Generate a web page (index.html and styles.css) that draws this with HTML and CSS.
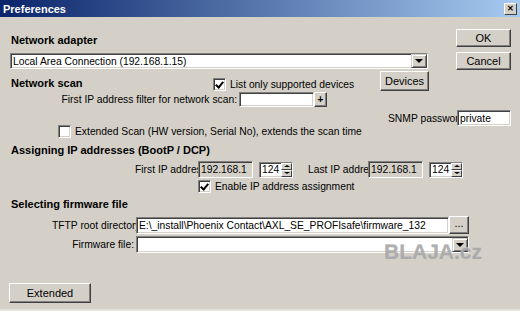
FILE: index.html
```html
<!DOCTYPE html>
<html lang="en">
<head>
  <meta charset="UTF-8" />
  <title>Preferences</title>
  <link rel="stylesheet" href="styles.css">
</head>
<body>
  <div class="ventana">
    <!-- Barra de titulo -->
    <div class="titulo">
      <span>Preferences</span>
      <span class="cerrar">&#x2715;</span>
    </div>

    <!-- Adaptador de red + botones OK/Cancel -->
    <div class="arriba">
      <div class="adaptador">
        <div class="encabezado enc-adaptador">Network adapter</div>
        <div class="campo combo combo-adaptador">
          <span class="texto">Local Area Connection (192.168.1.15)</span>
          <span class="desplegar"><i></i></span>
        </div>
      </div>
      <div class="acciones">
        <div class="boton ok">OK</div>
        <div class="boton cancel">Cancel</div>
      </div>
    </div>

    <!-- Escaneo de red -->
    <div class="fila fila-scan">
      <div class="encabezado enc-scan">Network scan</div>
      <label class="opcion opcion-lista"><span class="casilla marcada"></span>List only supported devices</label>
      <div class="boton devices">Devices</div>
    </div>
    <div class="fila fila-filtro">
      <span class="etiqueta etq-filtro">First IP address filter for network scan:</span>
      <span class="campo filtro"></span>
      <span class="boton mas">+</span>
    </div>
    <div class="fila fila-snmp">
      <span class="etiqueta etq-snmp">SNMP password:</span>
      <span class="campo snmp"><span class="texto">private</span></span>
    </div>
    <div class="fila fila-extendido">
      <label class="opcion"><span class="casilla"></span>Extended Scan (HW version, Serial No), extends the scan time</label>
    </div>

    <!-- Asignacion de IP -->
    <div class="encabezado enc-asignar">Assigning IP addresses (BootP / DCP)</div>
    <div class="fila fila-ip">
      <span class="etiqueta etq-primera">First IP address:</span>
      <span class="campo gris ip"><span class="texto">192.168.1</span></span>
      <span class="campo giro"><span class="texto">124</span><span class="flechas"><i class="arriba-f"></i><i class="abajo-f"></i></span></span>
      <span class="etiqueta etq-ultima">Last IP address:</span>
      <span class="campo gris ip"><span class="texto">192.168.1</span></span>
      <span class="campo giro"><span class="texto">124</span><span class="flechas"><i class="arriba-f"></i><i class="abajo-f"></i></span></span>
    </div>
    <div class="fila fila-habilitar">
      <label class="opcion"><span class="casilla marcada"></span>Enable IP address assignment</label>
    </div>

    <!-- Firmware -->
    <div class="encabezado enc-firmware">Selecting firmware file</div>
    <div class="fila fila-tftp">
      <span class="etiqueta etq-archivo">TFTP root directory:</span>
      <span class="campo tftp"><span class="texto">E:\_install\Phoenix Contact\AXL_SE_PROFIsafe\firmware_132</span></span>
      <span class="boton puntos">...</span>
    </div>
    <div class="fila fila-firmware">
      <span class="etiqueta etq-archivo">Firmware file:</span>
      <span class="campo combo combo-firmware"><span class="texto"></span><span class="desplegar"><i></i></span></span>
    </div>

    <div class="fila fila-extended">
      <div class="boton extended">Extended</div>
    </div>

    <div class="marca">BLAJA.cz</div>
  </div>
</body>
</html>
```

FILE: styles.css
```css
body {
  margin: 0;
  padding: 0;
  font-family: 'Liberation Sans', Arial, sans-serif;
  font-size: 10.3px;
  color: #000;
  background: #d4d0c8;
}
.ventana {
  position: relative;
  width: 520px;
  height: 311px;
  overflow: hidden;
  background: #d4d0c8;
  box-sizing: border-box;
  border-bottom: 2px solid #e4e2dc;
}
.titulo {
  height: 17px;
  display: flex;
  align-items: center;
  justify-content: space-between;
  padding: 0 3px;
  background: linear-gradient(to right, #0a246a, #a6caf0);
  color: #fff;
  font-weight: bold;
  font-size: 11px;
}
.cerrar {
  width: 11px;
  height: 10px;
  background: #d4d0c8;
  color: #000;
  font-size: 8px;
  line-height: 10px;
  text-align: center;
  border: 1px solid;
  border-color: #fff #404040 #404040 #fff;
}

/* Controles tipo Windows */
.boton {
  display: flex;
  align-items: center;
  justify-content: center;
  box-sizing: border-box;
  background: #d4d0c8;
  border: 1px solid;
  border-color: #fff #404040 #404040 #fff;
  box-shadow: inset -1px -1px #808080;
  font-size: 11px;
}
.campo {
  display: flex;
  align-items: center;
  box-sizing: border-box;
  background: #fff;
  border: 1px solid;
  border-color: #808080 #fff #fff #808080;
  box-shadow: inset 1px 1px #404040, inset -1px -1px #d4d0c8;
  overflow: hidden;
  white-space: nowrap;
}
.campo .texto {
  flex: 1;
  padding-left: 2px;
  overflow: hidden;
}
.campo.gris {
  background: #d4d0c8;
}
.casilla {
  display: inline-block;
  flex-shrink: 0;
  width: 13px;
  height: 13px;
  box-sizing: border-box;
  background: #fff;
  border: 1px solid;
  border-color: #808080 #fff #fff #808080;
  box-shadow: inset 1px 1px #404040, inset -1px -1px #d4d0c8;
  margin-right: 4px;
  position: relative;
}
.casilla.marcada::after {
  content: '';
  position: absolute;
  left: 3px;
  top: 1px;
  width: 3px;
  height: 6px;
  border: solid #000;
  border-width: 0 2px 2px 0;
  transform: rotate(40deg);
}
.opcion {
  display: flex;
  align-items: center;
  white-space: nowrap;
}
.desplegar {
  width: 16px;
  height: 14px;
  box-sizing: border-box;
  background: #d4d0c8;
  border: 1px solid;
  border-color: #d4d0c8 #404040 #404040 #d4d0c8;
  box-shadow: inset 1px 1px #fff, inset -1px -1px #808080;
  display: flex;
  align-items: center;
  justify-content: center;
}
.desplegar i {
  width: 0;
  height: 0;
  border-left: 4px solid transparent;
  border-right: 4px solid transparent;
  border-top: 4px solid #000;
}
.encabezado {
  font-weight: bold;
  font-size: 11px;
  line-height: 13px;
  white-space: nowrap;
}
.etiqueta {
  white-space: nowrap;
  overflow: hidden;
  text-align: right;
}

/* Parte superior */
.arriba {
  display: flex;
  padding: 12px 9px 0 10px;
}
.adaptador {
  width: 418px;
}
.enc-adaptador {
  margin: 5px 0 0 1px;
}
.combo-adaptador {
  margin-top: 6px;
  height: 16px;
}
.acciones {
  margin-left: auto;
  width: 55px;
  display: flex;
  flex-direction: column;
  gap: 5px;
}
.acciones .boton {
  height: 18px;
}

.fila {
  display: flex;
  align-items: flex-start;
}

/* Network scan */
.fila-scan {
  height: 21px;
}
.enc-scan {
  margin: 7px 0 0 11px;
  width: 202px;
}
.opcion-lista {
  margin-top: 8px;
  width: 167px;
}
.devices {
  margin-top: 1px;
  width: 49px;
  height: 20px;
}
.fila-filtro {
  margin-top: 1px;
  height: 15px;
  align-items: center;
}
.etq-filtro {
  width: 237px;
  padding-right: 2px;
}
.filtro {
  width: 75px;
  height: 15px;
}
.mas {
  width: 13px;
  height: 15px;
  font-size: 10px;
  font-weight: bold;
}
.fila-snmp {
  margin-top: 3px;
  height: 16px;
  justify-content: flex-end;
  padding-right: 9px;
  align-items: center;
}
.etq-snmp {
  width: 69px;
  text-align: left;
}
.snmp {
  width: 54px;
  height: 16px;
}
.fila-extendido {
  margin-top: -1px;
  padding-left: 58px;
  height: 13px;
  align-items: center;
}

/* Asignacion IP */
.enc-asignar {
  margin: 6px 0 0 11px;
}
.fila-ip {
  margin-top: 4px;
  height: 17px;
  align-items: center;
}
.etq-primera {
  margin-left: 135px;
  width: 63px;
  text-align: left;
}
.etq-ultima {
  margin-left: 15px;
  width: 60px;
  text-align: left;
}
.ip {
  width: 55px;
  height: 17px;
}
.giro {
  margin-left: 6px;
  width: 34px;
  height: 16px;
}
.flechas {
  width: 11px;
  height: 14px;
  display: flex;
  flex-direction: column;
}
.flechas i {
  flex: 1;
  box-sizing: border-box;
  background: #d4d0c8;
  border: 1px solid;
  border-color: #fff #404040 #404040 #fff;
  display: flex;
  align-items: center;
  justify-content: center;
}
.flechas i::after {
  content: '';
  width: 0;
  height: 0;
  border-left: 3px solid transparent;
  border-right: 3px solid transparent;
}
.arriba-f::after {
  border-bottom: 2px solid #000;
}
.abajo-f::after {
  border-top: 2px solid #000;
}
.fila-habilitar {
  margin-top: 2px;
  padding-left: 198px;
  height: 13px;
  align-items: center;
}

/* Firmware */
.enc-firmware {
  margin: 5px 0 0 11px;
}
.fila-tftp {
  margin-top: 5px;
  height: 18px;
  align-items: center;
}
.etq-archivo {
  width: 134px;
  padding-right: 2px;
}
.fila-tftp .etiqueta {
  text-align: left;
  width: 84px;
  margin-left: 52px;
  padding-right: 0;
}
.tftp {
  width: 313px;
  height: 17px;
}
.puntos {
  width: 20px;
  height: 18px;
  padding-bottom: 4px;
}
.fila-firmware {
  margin-top: 2px;
  height: 17px;
  align-items: center;
}
.combo-firmware {
  width: 333px;
  height: 17px;
}
.fila-extended {
  margin-top: 30px;
  padding-left: 9px;
}
.extended {
  width: 82px;
  height: 20px;
}

/* Marca de agua */
.marca {
  position: absolute;
  left: 384px;
  top: 240px;
  font-size: 21px;
  font-weight: bold;
  color: #a8a8a8;
  text-shadow: 0 -1px 0 #c4c4c4;
  opacity: 0.9;
}
```
